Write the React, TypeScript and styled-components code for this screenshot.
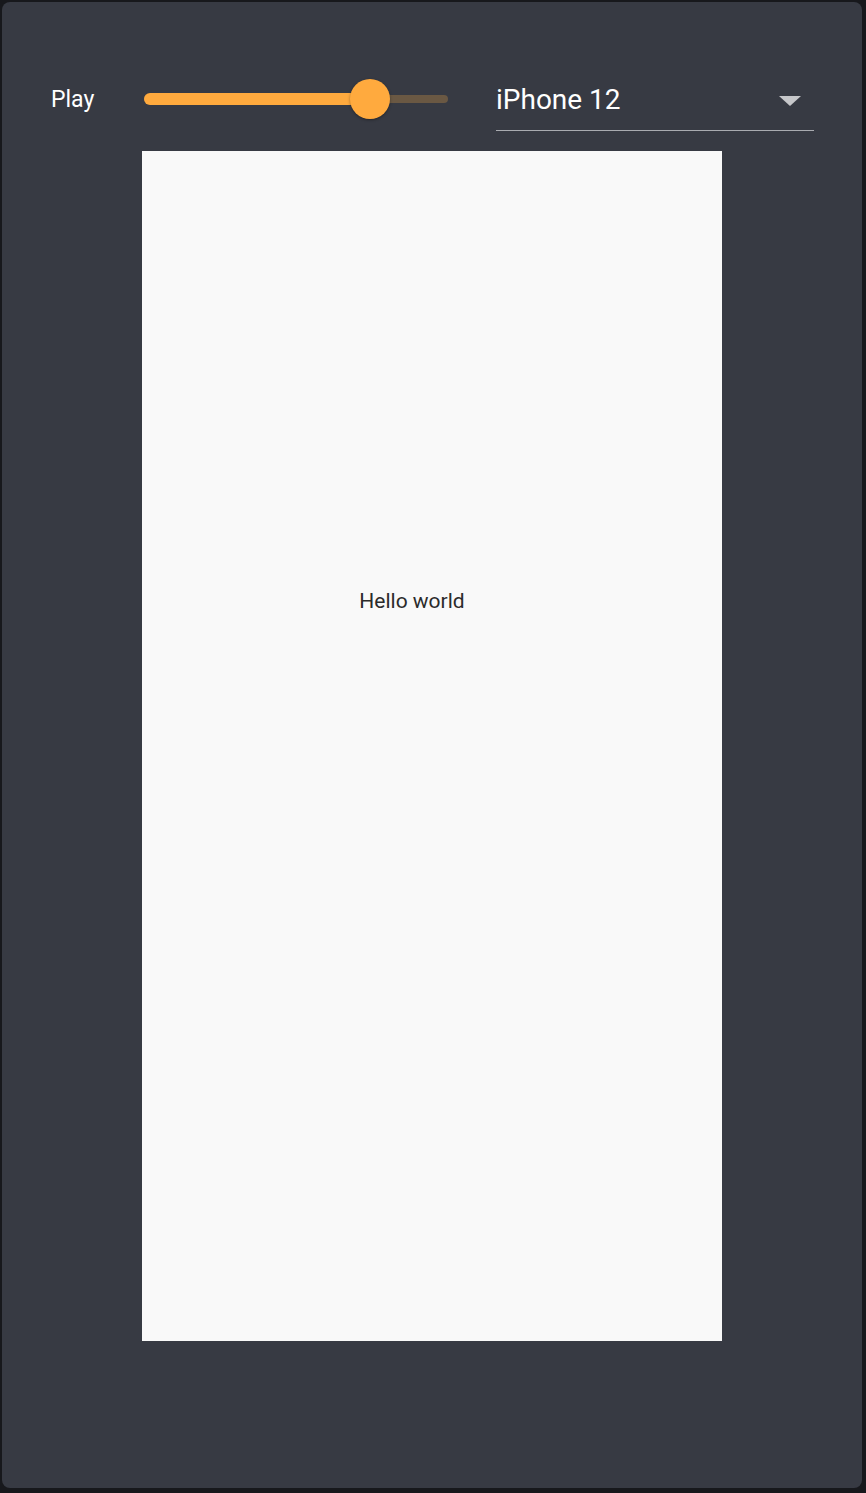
import styled, { createGlobalStyle } from 'styled-components'

const Global = createGlobalStyle`
  html, body {
    margin: 0;
    padding: 0;
    background: #17181c;
  }
  body {
    font-family: Roboto, "Noto Sans", sans-serif;
  }
`

const Page = styled.div`
  width: 866px;
  height: 1493px;
  padding: 2px 4px 5px 2px;
  box-sizing: border-box;
`

const Panel = styled.div`
  height: 100%;
  background: #373a43;
  border-radius: 8px;
  display: flex;
  flex-direction: column;
  align-items: flex-start;
`

const Toolbar = styled.div`
  display: flex;
  align-items: flex-start;
  margin-top: 77px;
  width: 100%;
  box-sizing: border-box;
  padding-left: 49px;
`

const PlayLabel = styled.span`
  color: #ffffff;
  font-size: 23px;
  line-height: 42px;
  width: 93px;
`

const Slider = styled.div`
  position: relative;
  width: 304px;
  height: 40px;
  display: flex;
  align-items: center;
`

const Track = styled.div`
  width: 100%;
  height: 8px;
  border-radius: 4px;
  background: #6a5843;
`

const ActiveTrack = styled.div`
  position: absolute;
  left: 0;
  top: 14px;
  height: 12px;
  border-radius: 6px;
  background: #ffaa3e;
`

const Thumb = styled.div`
  position: absolute;
  top: 0;
  width: 40px;
  height: 40px;
  border-radius: 50%;
  background: #ffaa3e;
  box-shadow: 0 1px 3px rgba(0, 0, 0, 0.35);
  transform: translateX(-50%);
`

const Select = styled.div`
  margin-left: 48px;
  width: 318px;
  height: 52px;
  display: flex;
  align-items: flex-start;
  justify-content: space-between;
  border-bottom: 1px solid #a9abb0;
  box-sizing: border-box;
`

const SelectValue = styled.span`
  color: #ffffff;
  font-size: 28px;
  line-height: 42px;
`

const Arrow = styled.div`
  width: 0;
  height: 0;
  margin-top: 17px;
  border-left: 11px solid transparent;
  border-right: 11px solid transparent;
  border-top: 10px solid #c6c7ca;
  margin-right: 13px;
`

const Screen = styled.div`
  margin-left: 140px;
  margin-top: 20px;
  width: 580px;
  height: 1190px;
  background: #f9f9f9;
  display: flex;
  justify-content: center;
`

const Greeting = styled.span`
  margin-top: 438px;
  margin-right: 40px;
  height: 26px;
  color: #2b2b2b;
  font-size: 21px;
`

const value = 0.745

export default function App() {
  return (
    <>
      <Global />
      <Page>
        <Panel>
          <Toolbar>
            <PlayLabel>Play</PlayLabel>
            <Slider>
              <Track />
              <ActiveTrack style={{ width: `${value * 100}%` }} />
              <Thumb style={{ left: `${value * 100}%` }} />
            </Slider>
            <Select>
              <SelectValue>iPhone 12</SelectValue>
              <Arrow />
            </Select>
          </Toolbar>
          <Screen>
            <Greeting>Hello world</Greeting>
          </Screen>
        </Panel>
      </Page>
    </>
  )
}
